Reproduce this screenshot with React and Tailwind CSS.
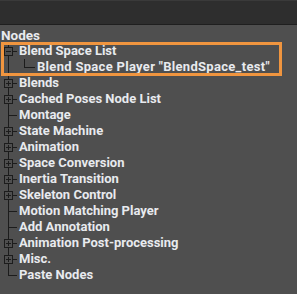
import React from "react";

const items = [
  { label: "Blend Space List", open: true },
  { label: 'Blend Space Player "BlendSpace_test"', child: true },
  { label: "Blends", plus: true },
  { label: "Cached Poses Node List", plus: true },
  { label: "Montage" },
  { label: "State Machine", plus: true },
  { label: "Animation", plus: true },
  { label: "Space Conversion", plus: true },
  { label: "Inertia Transition", plus: true },
  { label: "Skeleton Control", plus: true },
  { label: "Motion Matching Player" },
  { label: "Add Annotation" },
  { label: "Animation Post-processing", plus: true },
  { label: "Misc.", plus: true },
  { label: "Paste Nodes", last: true },
];

const LINE = "#1c1c1c";

// tree connector drawn for each row
const Connector = ({ item }) => {
  const w = item.child ? 37 : 19;
  return (
    <svg width={w} height="16" className="shrink-0" shapeRendering="crispEdges">
      <line x1="8.5" y1="0" x2="8.5" y2={item.last ? 8 : 16} stroke={LINE} />
      {item.child ? (
        <>
          <line x1="24.5" y1="0" x2="24.5" y2="8.5" stroke={LINE} />
          <line x1="24" y1="8.5" x2="35" y2="8.5" stroke={LINE} />
        </>
      ) : item.plus || item.open ? (
        <>
          <rect x="4.5" y="4.5" width="8" height="8" fill="#4f4f4f" stroke={LINE} />
          <line x1="12" y1="8.5" x2="17" y2="8.5" stroke={LINE} />
          <line x1="6" y1="8.5" x2="11" y2="8.5" stroke={LINE} />
          {item.plus && <line x1="8.5" y1="6" x2="8.5" y2="11" stroke={LINE} />}
          {item.open && <line x1="8.5" y1="12" x2="8.5" y2="16" stroke={LINE} />}
        </>
      ) : (
        <line x1="8" y1="8.5" x2="17" y2="8.5" stroke={LINE} />
      )}
    </svg>
  );
};

export default function App() {
  return (
    <div className="w-[297px] h-[294px] bg-[#4f4f4f] flex flex-col overflow-hidden" style={{ fontFamily: "Roboto, 'Liberation Sans', sans-serif" }}>
      <div className="h-[25px] bg-[#2e2e2e] border-t border-[#3a3a3a] border-b border-b-[#1f1f1f] shrink-0" />
      <div className="pl-[1px] pt-[2px] text-[13.5px] leading-[16px] font-bold text-[#e8eaee]">Nodes</div>
      <div className="relative flex flex-col">
        {items.map((item) => (
          <div key={item.label} className="flex items-center h-4">
            <Connector item={item} />
            <span className={`text-[13px] font-bold text-[#e8eaee] whitespace-nowrap leading-4 ${item.child ? "tracking-[0.3px]" : ""}`}>
              {item.label}
            </span>
          </div>
        ))}
        <div className="absolute left-[1px] top-[-1px] w-[281px] h-[34px] border-[3px] border-[#f0953f] pointer-events-none" />
      </div>
    </div>
  );
}
